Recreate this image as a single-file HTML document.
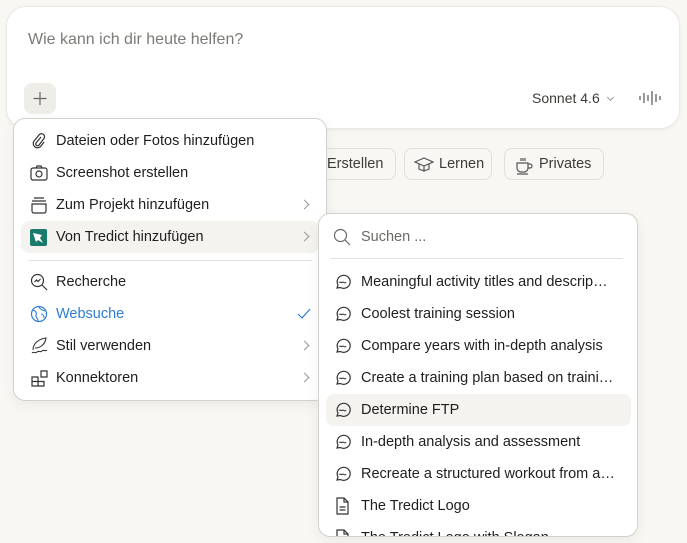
<!DOCTYPE html>
<html><head><meta charset="utf-8"><style>
*{box-sizing:border-box;margin:0;padding:0}
body{width:687px;height:543px;background:#f8f7f3;font-family:"Liberation Sans",sans-serif;position:relative;overflow:hidden;color:#1f1e1c}
.card{position:absolute;left:6px;top:6px;width:674px;height:123px;background:#fff;border-radius:20px;box-shadow:0 1px 3px rgba(0,0,0,.06);border:1px solid #eceae4}
.ph{position:absolute;left:21px;top:24px;font-size:16px;color:#7b7a75}
.plus{position:absolute;left:17px;top:76px;width:32px;height:31px;background:#efede8;border-radius:8px}
.sonnet{position:absolute;left:525px;top:83px;font-size:14px;color:#3d3c39}
.chip{position:absolute;top:148px;height:32px;border:1px solid #e1dfd9;border-radius:8px;background:#f8f7f3;font-size:14.5px;color:#3d3c39;line-height:30px;padding-left:34px}
.menu{position:absolute;background:#fff;border:1px solid #d3d1cb;border-radius:12px;box-shadow:0 4px 14px rgba(0,0,0,.06);overflow:hidden}
.row{position:absolute;left:0;height:32px;line-height:32px;font-size:14.5px;white-space:nowrap}
.hov{background:#f4f3ef;border-radius:8px}
.chev{position:absolute;right:18px;width:7px;height:7px;border-right:1.3px solid #999;border-top:1.3px solid #999;transform:rotate(45deg)}
svg{position:absolute}
</style></head><body>
<div class="card">
 <div class="ph">Wie kann ich dir heute helfen?</div>
 <div class="plus"><svg width="32" height="31" viewBox="0 0 32 31"><path d="M16 9v13M9.5 15.5h13" stroke="#666" stroke-width="1.2"/></svg></div>
 <div class="sonnet">Sonnet 4.6 <span style="display:inline-block;width:5px;height:5px;border-right:1px solid #999;border-bottom:1px solid #999;transform:rotate(45deg);margin:0 0 3px 4px"></span></div>
 <svg style="left:632px;top:83px" width="22" height="16" viewBox="0 0 22 16"><path d="M1 6v4M5 3v10M9 5v6M13 1v14M17 4v8M21 6v4" stroke="#555" stroke-width="1.2"/></svg>
</div>
<div class="chip" style="left:300px;width:96px;padding-left:26px">Erstellen</div>
<div class="chip" style="left:404px;width:88px">Lernen<svg style="left:9px;top:7px" width="20" height="18" viewBox="0 0 20 18"><path d="M1 6l9-4 9 4-9 4zM5 8v5c3 2 7 2 10 0V8M10 10v6" fill="none" stroke="#555" stroke-width="1.2"/></svg></div>
<div class="chip" style="left:504px;width:100px">Privates<svg style="left:9px;top:6px" width="20" height="20" viewBox="0 0 20 20"><path d="M3 8h11v5a4 4 0 0 1-4 4H7a4 4 0 0 1-4-4zM14 9h2a2 2 0 0 1 0 4h-2M7 3v3M9 3v3M11 3v3M3 19h11" fill="none" stroke="#555" stroke-width="1.2"/></svg></div>

<div class="menu" style="left:13px;top:118px;width:314px;height:283px">
 <div class="row" style="top:6px;left:42px">Dateien oder Fotos hinzufügen</div>
 <svg style="left:17px;top:13px" width="16" height="18" viewBox="0 0 16 18"><path d="M10 5l-5 6a1.8 1.8 0 0 0 3 2l5-6.5a3 3 0 0 0-5-3.5L3 9a4.3 4.3 0 0 0 7 5l3-4" fill="none" stroke="#333" stroke-width="1.2"/></svg>
 <div class="row" style="top:38px;left:42px">Screenshot erstellen</div>
 <svg style="left:16px;top:46px" width="18" height="16" viewBox="0 0 18 16"><rect x="1" y="3" width="16" height="12" rx="2" fill="none" stroke="#333" stroke-width="1.2"/><circle cx="9" cy="9" r="3" fill="none" stroke="#333" stroke-width="1.2"/><path d="M6 3l1-2h4l1 2" fill="none" stroke="#333" stroke-width="1.2"/></svg>
 <div class="row" style="top:70px;left:42px">Zum Projekt hinzufügen</div>
 <svg style="left:16px;top:78px" width="18" height="17" viewBox="0 0 18 17"><path d="M4 1h10M2 4h14M2 7h14v7a2 2 0 0 1-2 2H4a2 2 0 0 1-2-2z" fill="none" stroke="#333" stroke-width="1.2"/></svg>
 <div style="top:82px" class="chev"></div>
 <div class="row hov" style="top:102px;left:7px;width:298px"></div>
 <div class="row" style="top:102px;left:42px">Von Tredict hinzufügen</div>
 <svg style="left:16px;top:110px" width="17" height="17" viewBox="0 0 17 17"><rect width="17" height="17" rx="2" fill="#1a7a6b"/><path d="M3 4l9 2-2 3 3 5-5-3-2 2z" fill="#fff"/></svg>
 <div style="top:114px" class="chev"></div>
 <div style="position:absolute;left:14px;right:14px;top:141px;border-top:1px solid #e3e1dc"></div>
 <div class="row" style="top:147px;left:42px">Recherche</div>
 <svg style="left:16px;top:154px" width="18" height="18" viewBox="0 0 18 18"><circle cx="7.5" cy="7.5" r="6" fill="none" stroke="#333" stroke-width="1.2"/><path d="M12 12l5 5M4.5 9l2-2 1.5 1.5 2.5-2.5" fill="none" stroke="#333" stroke-width="1.2"/></svg>
 <div class="row" style="top:179px;left:42px;color:#2e7dd6">Websuche</div>
 <svg style="left:16px;top:186px" width="18" height="18" viewBox="0 0 18 18"><circle cx="9" cy="9" r="7.5" fill="none" stroke="#2e7dd6" stroke-width="1.2"/><path d="M3 5c3 1 4 3 3 5s2 3 2 6M9 2c1 3 4 3 6 4M11 9c2 0 3 2 3 4" fill="none" stroke="#2e7dd6" stroke-width="1.1"/></svg>
 <svg style="left:283px;top:189px" width="14" height="12" viewBox="0 0 14 12"><path d="M1 6l4 4 8-9" fill="none" stroke="#2e7dd6" stroke-width="1.2"/></svg>
 <div class="row" style="top:211px;left:42px">Stil verwenden</div>
 <svg style="left:16px;top:218px" width="18" height="18" viewBox="0 0 18 18"><path d="M3 13C3 7 8 2 16 1c-1 7-6 10-11 10M2 16c2-2 3 1 5-1s3 1 5-1 3 1 5-1" fill="none" stroke="#333" stroke-width="1.1"/></svg>
 <div style="top:223px" class="chev"></div>
 <div class="row" style="top:243px;left:42px">Konnektoren</div>
 <svg style="left:17px;top:251px" width="17" height="17" viewBox="0 0 17 17"><path d="M1 7h6v9H1zM1 11.5h12V16H7M10 1h6v6h-6z" fill="none" stroke="#333" stroke-width="1.2"/></svg>
 <div style="top:255px" class="chev"></div>
</div>

<div class="menu" style="left:318px;top:213px;width:320px;height:324px">
 <svg style="left:14px;top:14px" width="18" height="18" viewBox="0 0 18 18"><circle cx="7.5" cy="7.5" r="6" fill="none" stroke="#666" stroke-width="1.2"/><path d="M12 12l5 5" stroke="#666" stroke-width="1.2"/></svg>
 <div class="row" style="top:7px;left:42px;color:#6b6a66">Suchen ...</div>
 <div style="position:absolute;left:12px;right:14px;top:44px;border-top:1px solid #e3e1dc"></div>
 <div class="row hov" style="top:180px;left:7px;width:305px"></div>
 <div id="items"></div>
</div>
<script>
var t=["Meaningful activity titles and descrip…","Coolest training session","Compare years with in-depth analysis","Create a training plan based on traini…","Determine FTP","In-depth analysis and assessment","Recreate a structured workout from a…","The Tredict Logo","The Tredict Logo with Slogan"];
var h="";t.forEach(function(s,i){var y=52+i*32;var ic=i<7?'<svg style="left:15px;top:'+(y+8)+'px" width="17" height="17" viewBox="0 0 17 17"><path d="M3 14l1-3a6.5 6.5 0 1 1 2.5 2.5z" fill="none" stroke="#333" stroke-width="1.2"/><path d="M5 8.5c1-1 1.5 0 2.5 0s1.5-1 2.5 0 1.5 0 2 -0.5" fill="none" stroke="#333" stroke-width="1"/></svg>':'<svg style="left:16px;top:'+(y+7)+'px" width="15" height="18" viewBox="0 0 15 18"><path d="M2 1h7l4 4v12H2zM9 1v4h4M4.5 10h6M4.5 13h6" fill="none" stroke="#333" stroke-width="1.2"/></svg>';h+=ic+'<div class="row" style="top:'+y+'px;left:42px">'+s+'</div>';});
document.getElementById("items").innerHTML=h;
</script>
</body></html>
